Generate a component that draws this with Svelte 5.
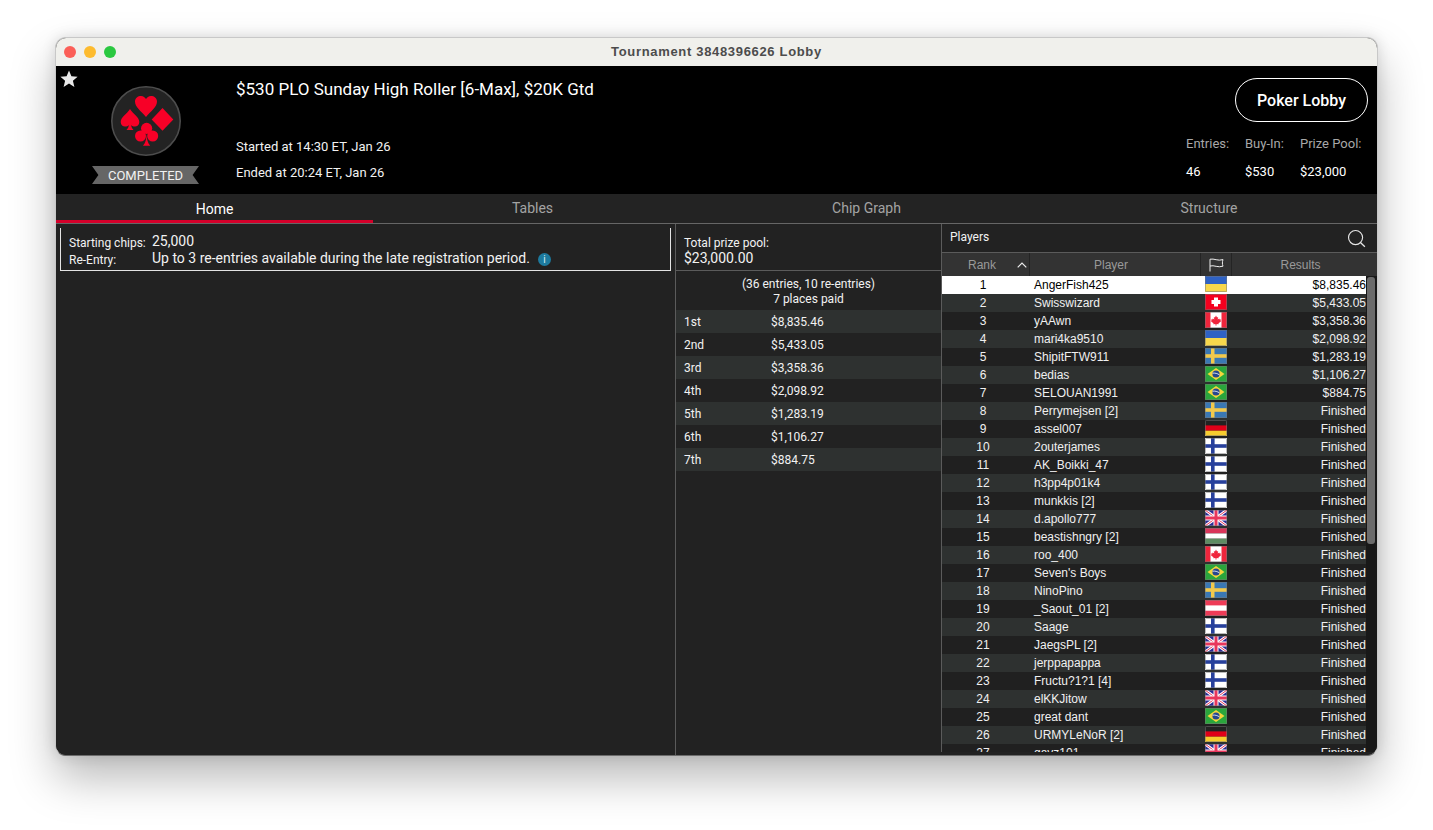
<script>
  const tabs = ["Home", "Tables", "Chip Graph", "Structure"];

  const stats = [
    { label: "Entries:", value: "46" },
    { label: "Buy-In:", value: "$530" },
    { label: "Prize Pool:", value: "$23,000" },
  ];

  const payouts = [
    ["1st", "$8,835.46"],
    ["2nd", "$5,433.05"],
    ["3rd", "$3,358.36"],
    ["4th", "$2,098.92"],
    ["5th", "$1,283.19"],
    ["6th", "$1,106.27"],
    ["7th", "$884.75"],
  ];

  const players = [
    ["AngerFish425", "ua", "$8,835.46"],
    ["Swisswizard", "ch", "$5,433.05"],
    ["yAAwn", "ca", "$3,358.36"],
    ["mari4ka9510", "ua", "$2,098.92"],
    ["ShipitFTW911", "se", "$1,283.19"],
    ["bedias", "br", "$1,106.27"],
    ["SELOUAN1991", "br", "$884.75"],
    ["Perrymejsen [2]", "se"],
    ["assel007", "de"],
    ["2outerjames", "fi"],
    ["AK_Boikki_47", "fi"],
    ["h3pp4p01k4", "fi"],
    ["munkkis [2]", "fi"],
    ["d.apollo777", "gb"],
    ["beastishngry [2]", "hu"],
    ["roo_400", "ca"],
    ["Seven's Boys", "br"],
    ["NinoPino", "se"],
    ["_Saout_01 [2]", "at"],
    ["Saage", "fi"],
    ["JaegsPL [2]", "gb"],
    ["jerppapappa", "fi"],
    ["Fructu?1?1 [4]", "fi"],
    ["elKKJitow", "gb"],
    ["great dant", "br"],
    ["URMYLeNoR [2]", "de"],
    ["gavz101", "gb"],
  ];
</script>

{#snippet flag(code)}
  <svg class="flag" viewBox="0 0 22 16" aria-hidden="true">
    {#if code === "ua"}
      <rect width="22" height="8" fill="#2f62c4" />
      <rect y="8" width="22" height="8" fill="#f7d74c" />
    {:else if code === "ch"}
      <rect width="22" height="16" fill="#f5001e" />
      <rect x="9" y="3.5" width="4" height="9" fill="#fff" />
      <rect x="6.5" y="6" width="9" height="4" fill="#fff" />
    {:else if code === "ca"}
      <rect width="22" height="16" fill="#fff" />
      <rect width="5.5" height="16" fill="#f0253c" />
      <rect x="16.5" width="5.5" height="16" fill="#f0253c" />
      <path d="M11 3.5l1 2 1.2-.6-.5 2.6 1.5-1 .5 1.1 1.3-.2-.5 1.6.5.4-2.5 1.9.2 1-2.2-.3v1.5h-1v-1.5l-2.2.3.2-1-2.5-1.9.5-.4-.5-1.6 1.3.2.5-1.1 1.5 1-.5-2.6 1.2.6z" fill="#f0253c" />
    {:else if code === "se"}
      <rect width="22" height="16" fill="#3a78b4" />
      <rect x="6" width="3.5" height="16" fill="#f2c94c" />
      <rect y="6.2" width="22" height="3.6" fill="#f2c94c" />
    {:else if code === "br"}
      <rect width="22" height="16" fill="#2aa63c" />
      <path d="M11 2l8.5 6-8.5 6-8.5-6z" fill="#f5d63d" />
      <circle cx="11" cy="8" r="3.6" fill="#26478f" />
      <path d="M7.5 7.2c2.5-.4 5 .3 7 1.7" stroke="#fff" stroke-width=".8" fill="none" />
    {:else if code === "de"}
      <rect width="22" height="5.4" fill="#222" />
      <rect y="5.4" width="22" height="5.3" fill="#e00018" />
      <rect y="10.7" width="22" height="5.3" fill="#f7cd2e" />
    {:else if code === "fi"}
      <rect width="22" height="16" fill="#fff" />
      <rect x="6" width="3.6" height="16" fill="#27409c" />
      <rect y="6.2" width="22" height="3.6" fill="#27409c" />
    {:else if code === "gb"}
      <rect width="22" height="16" fill="#2a2a96" />
      <path d="M0 0l22 16M22 0L0 16" stroke="#fff" stroke-width="3" />
      <path d="M0 0l22 16M22 0L0 16" stroke="#e8365c" stroke-width="1" />
      <rect x="8.5" width="5" height="16" fill="#fff" />
      <rect y="5.5" width="22" height="5" fill="#fff" />
      <rect x="9.5" width="3" height="16" fill="#e8365c" />
      <rect y="6.5" width="22" height="3" fill="#e8365c" />
    {:else if code === "hu"}
      <rect width="22" height="5.4" fill="#d9355a" />
      <rect y="5.4" width="22" height="5.3" fill="#fff" />
      <rect y="10.7" width="22" height="5.3" fill="#5d8c62" />
    {:else if code === "at"}
      <rect width="22" height="16" fill="#ee3b57" />
      <rect y="5.4" width="22" height="5.3" fill="#fff" />
    {/if}
    <rect x=".4" y=".4" width="21.2" height="15.2" rx="1" fill="none" stroke="rgba(120,120,120,.7)" stroke-width=".8" />
  </svg>
{/snippet}

<div class="page">
  <div class="window">
    <div class="titlebar">
      <span class="light red"></span>
      <span class="light yellow"></span>
      <span class="light green"></span>
      <span class="window-title">Tournament 3848396626 Lobby</span>
    </div>

    <header class="header">
      <svg class="star" viewBox="0 0 18 18" aria-hidden="true">
        <path d="M9 .5l2.4 5.8 6.2.5-4.7 4 1.5 6.1L9 13.6l-5.4 3.3 1.5-6.1-4.7-4 6.2-.5z" fill="#e8e8e8" />
      </svg>

      <div class="logo-col">
        <svg class="badge" viewBox="0 0 70 70" aria-hidden="true">
          <circle cx="35" cy="35" r="34.2" fill="#232323" stroke="#4d4d4d" stroke-width="1.6" />
          <path d="M35 31C30 25 24 21 24 15.5 24 12 27 10 30 10 32.5 10 34 11.5 35 13 36 11.5 37.5 10 40 10 43 10 46 12 46 15.5 46 21 40 25 35 31Z" fill="#f70027" />
          <path d="M51.5 22L62.3 33.4 51.5 44.7 40.7 33.4Z" fill="#f70027" />
          <path d="M19 23C16 28 9.7 31 9.7 36 9.7 39 12 40.5 14 40.5 15.5 40.5 17 40 17.8 39 17.6 41 17 42.5 15.5 44H22.5C21 42.5 20.4 41 20.2 39 21 40 22.5 40.5 24 40.5 26 40.5 28.3 39 28.3 36 28.3 31 22 28 19 23Z" fill="#f70027" />
          <circle cx="35.6" cy="42.4" r="5.6" fill="#f70027" />
          <circle cx="29.5" cy="50" r="5.5" fill="#f70027" />
          <circle cx="41.7" cy="50" r="5.5" fill="#f70027" />
          <path d="M35.6 46C35.6 53 34.5 57 32 59.7H39.2C36.7 57 35.6 53 35.6 46Z" fill="#f70027" />
        </svg>
        <div class="ribbon">COMPLETED</div>
      </div>

      <div class="info">
        <h1 class="event-name">$530 PLO Sunday High Roller [6-Max], $20K Gtd</h1>
        <div class="times">
          <div>Started at 14:30 ET, Jan 26</div>
          <div>Ended at 20:24 ET, Jan 26</div>
        </div>
      </div>

      <div class="summary">
        <button class="lobby-btn">Poker Lobby</button>
        <div class="stats">
          {#each stats as stat}
            <div class="stat">
              <span class="stat-label">{stat.label}</span>
              <span class="stat-value">{stat.value}</span>
            </div>
          {/each}
        </div>
      </div>
    </header>

    <nav class="tabs">
      {#each tabs as tab, i}
        <div class="tab" class:active={i === 0}>{tab}</div>
      {/each}
    </nav>

    <main class="content">
      <section class="home">
        <div class="rules">
          <span class="rule-label">Starting chips:</span>
          <span class="rule-value">25,000</span>
          <span class="rule-label">Re-Entry:</span>
          <span class="rule-value">
            Up to 3 re-entries available during the late registration period.
            <span class="info-dot">i</span>
          </span>
        </div>
      </section>

      <section class="prizes">
        <div class="pool">
          <div class="pool-label">Total prize pool:</div>
          <div class="pool-value">$23,000.00</div>
        </div>
        <div class="paid">
          <div>(36 entries, 10 re-entries)</div>
          <div>7 places paid</div>
        </div>
        {#each payouts as row}
          <div class="payout">
            <span class="place">{row[0]}</span>
            <span>{row[1]}</span>
          </div>
        {/each}
      </section>

      <section class="players">
        <div class="players-title">
          <span>Players</span>
          <svg class="search" viewBox="0 0 20 20" aria-hidden="true">
            <circle cx="9" cy="9" r="7.4" fill="none" stroke="#e6e6e6" stroke-width="1.2" />
            <path d="M14.4 14.4l4.4 4.2" stroke="#e6e6e6" stroke-width="1.4" />
          </svg>
        </div>
        <div class="thead">
          <div class="th rank-head">
            Rank
            <svg class="chevron" viewBox="0 0 10 6" aria-hidden="true">
              <path d="M.7 5.3L5 1l4.3 4.3" fill="none" stroke="#eee" stroke-width="1.2" />
            </svg>
          </div>
          <div class="th player-head">Player</div>
          <div class="th">
            <svg class="flag-head" viewBox="0 0 15 14" aria-hidden="true">
              <path d="M1 13.5V1.2C5 .2 9 3.4 14 1.6 13.2 4 13.2 6 14 8.2 9 10 5 6.8 1 8" fill="none" stroke="#eee" stroke-width="1" />
            </svg>
          </div>
          <div class="th last">Results</div>
        </div>
        <div class="tbody">
          <div class="rows">
            {#each players as p, i}
              <div class="row" class:selected={i === 0}>
                <span class="rank">{i + 1}</span>
                <span class="name">{p[0]}</span>
                <span class="flag-cell">{@render flag(p[1])}</span>
                <span class="result">{p[2] ?? "Finished"}</span>
              </div>
            {/each}
          </div>
          <div class="scrollbar"><div class="thumb"></div></div>
        </div>
      </section>
    </main>
  </div>
</div>

<style>
  :global(body) {
    background: #fff;
    overflow: hidden;
  }

  .page {
    height: 830px;
    box-sizing: border-box;
    padding: 37px 55px 0;
    font-family: Roboto, sans-serif;
    color: #f2f2f2;
  }

  .window {
    width: 1323px;
    height: 719px;
    box-sizing: border-box;
    display: flex;
    flex-direction: column;
    border: 1px solid #c8c8c8;
    border-bottom-color: #6c6c6c;
    border-radius: 11px;
    overflow: hidden;
    background: #222;
    box-shadow: 0 22px 45px rgba(0, 0, 0, 0.28), 0 0 14px rgba(0, 0, 0, 0.12);
  }

  .titlebar {
    position: relative;
    flex: none;
    height: 28px;
    display: flex;
    align-items: center;
    gap: 8px;
    padding-left: 8px;
    background: #f0f0ec;
  }

  .light {
    width: 12px;
    height: 12px;
    border-radius: 50%;
  }

  .red { background: #fb5f57; }
  .yellow { background: #fdbb2e; }
  .green { background: #2ac840; }

  .window-title {
    position: absolute;
    left: 0;
    right: 0;
    margin-top: -2px;
    text-align: center;
    font: bold 13px "Liberation Sans", sans-serif;
    letter-spacing: 0.67px;
    color: #4c4c4c;
  }

  .header {
    position: relative;
    flex: none;
    height: 128px;
    display: flex;
    background: #000;
  }

  .star {
    position: absolute;
    left: 4px;
    top: 4px;
    width: 18px;
    height: 18px;
  }

  .logo-col {
    width: 180px;
    flex: none;
    display: flex;
    flex-direction: column;
    align-items: center;
    padding-top: 20px;
    box-sizing: border-box;
  }

  .badge {
    width: 70px;
    height: 70px;
    margin-left: -1px;
  }

  .ribbon {
    width: 107px;
    height: 18px;
    margin-top: 10px;
    margin-left: -1px;
    padding-top: 1px;
    box-sizing: border-box;
    display: flex;
    align-items: center;
    justify-content: center;
    background: #666;
    clip-path: polygon(0 0, 100% 0, 94% 50%, 100% 100%, 0 100%, 6% 50%);
    font-size: 13px;
    color: #f2f2f2;
  }

  .info {
    flex: 1;
    padding-top: 13px;
  }

  .event-name {
    margin: 0;
    font-size: 17px;
    font-weight: 400;
    line-height: 21px;
    color: #fff;
  }

  .times {
    margin-top: 34px;
    font-size: 13px;
    line-height: 26px;
  }

  .summary {
    display: flex;
    flex-direction: column;
    align-items: flex-end;
    padding: 12px 9px 0 0;
  }

  .lobby-btn {
    width: 133px;
    height: 44px;
    padding: 0;
    background: none;
    border: 1px solid #fff;
    border-radius: 22px;
    color: #fff;
    font: 500 16px Roboto, sans-serif;
  }

  .stats {
    display: flex;
    margin-top: 14px;
    margin-right: -35px;
    align-self: flex-end;
  }

  .stat {
    display: flex;
    flex-direction: column;
    gap: 13px;
    font-size: 13px;
    line-height: 15px;
    width: 59px;
  }

  .stat:nth-child(2) { width: 55px; }
  .stat:nth-child(3) { width: 103px; }

  .stat-label { color: #a8a8a8; }
  .stat-value { color: #fff; }

  .tabs {
    flex: none;
    height: 30px;
    box-sizing: border-box;
    display: grid;
    grid-template-columns: 317px 319px 349px 1fr;
    border-bottom: 1px solid #666;
    background: #232323;
  }

  .tab {
    text-align: center;
    font-size: 14px;
    line-height: 28px;
    color: #a3a3a3;
  }

  .tab.active {
    height: 29px;
    box-sizing: border-box;
    line-height: 30px;
    border-bottom: 3px solid #d4002a;
    color: #fff;
  }

  .content {
    flex: 1;
    min-height: 0;
    display: grid;
    grid-template-columns: 620px 266px 1fr;
    grid-template-rows: minmax(0, 1fr);
    background: #222;
  }

  .home {
    padding: 4px 4px 0;
    border-right: 1px solid #5b5b5b;
  }

  .rules {
    height: 43px;
    box-sizing: border-box;
    display: grid;
    grid-template-columns: 83px 1fr;
    grid-auto-rows: 17px;
    align-items: start;
    padding: 5px 0 0 8px;
    border: 1px solid #e4e4e4;
    border-top: none;
  }

  .rule-label {
    font-size: 12px;
    line-height: 14px;
    padding-top: 3px;
  }

  .rule-value {
    display: flex;
    align-items: center;
    gap: 8px;
    font-size: 14px;
    line-height: 17px;
  }

  .info-dot {
    width: 13px;
    height: 13px;
    border-radius: 50%;
    background: #1d7a9e;
    color: #dfeef4;
    font-size: 10px;
    line-height: 13px;
    text-align: center;
    margin-top: 2px;
  }

  .prizes {
    border-right: 1px solid #5b5b5b;
    margin-bottom: 3px;
  }

  .pool {
    height: 47px;
    box-sizing: border-box;
    padding: 12px 8px 0;
    border-bottom: 1px solid #5b5b5b;
  }

  .pool-label {
    font-size: 12px;
    line-height: 14px;
  }

  .pool-value {
    font-size: 14px;
    line-height: 17px;
  }

  .paid {
    height: 39px;
    box-sizing: border-box;
    padding-top: 6px;
    text-align: center;
    font-size: 12px;
    line-height: 15px;
  }

  .payout {
    height: 23px;
    display: flex;
    align-items: center;
    padding-left: 8px;
    font-size: 12px;
  }

  .payout:nth-of-type(odd) {
    background: #2e3130;
  }

  .place {
    width: 87px;
  }

  .players {
    display: flex;
    flex-direction: column;
    min-height: 0;
    padding-bottom: 3px;
    overflow: hidden;
  }

  .players-title {
    flex: none;
    height: 29px;
    box-sizing: border-box;
    display: flex;
    align-items: center;
    justify-content: space-between;
    padding: 0 11px 2px 8px;
    border-bottom: 1px solid #5b5b5b;
    font-size: 12px;
  }

  .search {
    width: 19px;
    height: 19px;
    margin-top: 2px;
  }

  .thead {
    flex: none;
    height: 23px;
    display: grid;
    grid-template-columns: 88px 171px 31px 1fr;
    background: #333;
    font: 12px "Liberation Sans", sans-serif;
    color: #9a9a9a;
  }

  .th {
    position: relative;
    display: flex;
    align-items: center;
    justify-content: center;
    padding-top: 1px;
    border-right: 1px solid #242424;
  }

  .th.last {
    border-right: none;
    padding-right: 8px;
  }

  .player-head {
    padding-right: 8px;
  }

  .rank-head {
    padding-right: 7px;
    box-sizing: border-box;
  }

  .chevron {
    position: absolute;
    right: 2px;
    top: 9px;
    width: 10px;
    height: 6px;
  }

  .flag-head {
    width: 15px;
    height: 14px;
  }

  .tbody {
    flex: 1;
    min-height: 0;
    display: flex;
    overflow: hidden;
    background: #181818;
  }

  .rows {
    flex: 1;
    min-width: 0;
  }

  .row {
    height: 18px;
    display: grid;
    grid-template-columns: 92px 171px 22px 1fr;
    align-items: center;
    background: #202020;
    font: 12px "Liberation Sans", sans-serif;
    color: #f0f0f0;
  }

  .row:nth-child(even) {
    background: #2e3130;
  }

  .row.selected {
    background: #fff;
    color: #000;
  }

  .rank {
    padding-right: 10px;
    text-align: center;
  }

  .flag-cell {
    display: flex;
    height: 16px;
    align-self: start;
  }

  .flag {
    width: 22px;
    height: 16px;
    display: block;
  }

  .result {
    text-align: right;
  }

  .scrollbar {
    flex: none;
    width: 11px;
    padding: 1px 2px 0 1px;
    box-sizing: border-box;
  }

  .thumb {
    height: 267px;
    border-radius: 3px;
    background: #6b6b6b;
  }
</style>
